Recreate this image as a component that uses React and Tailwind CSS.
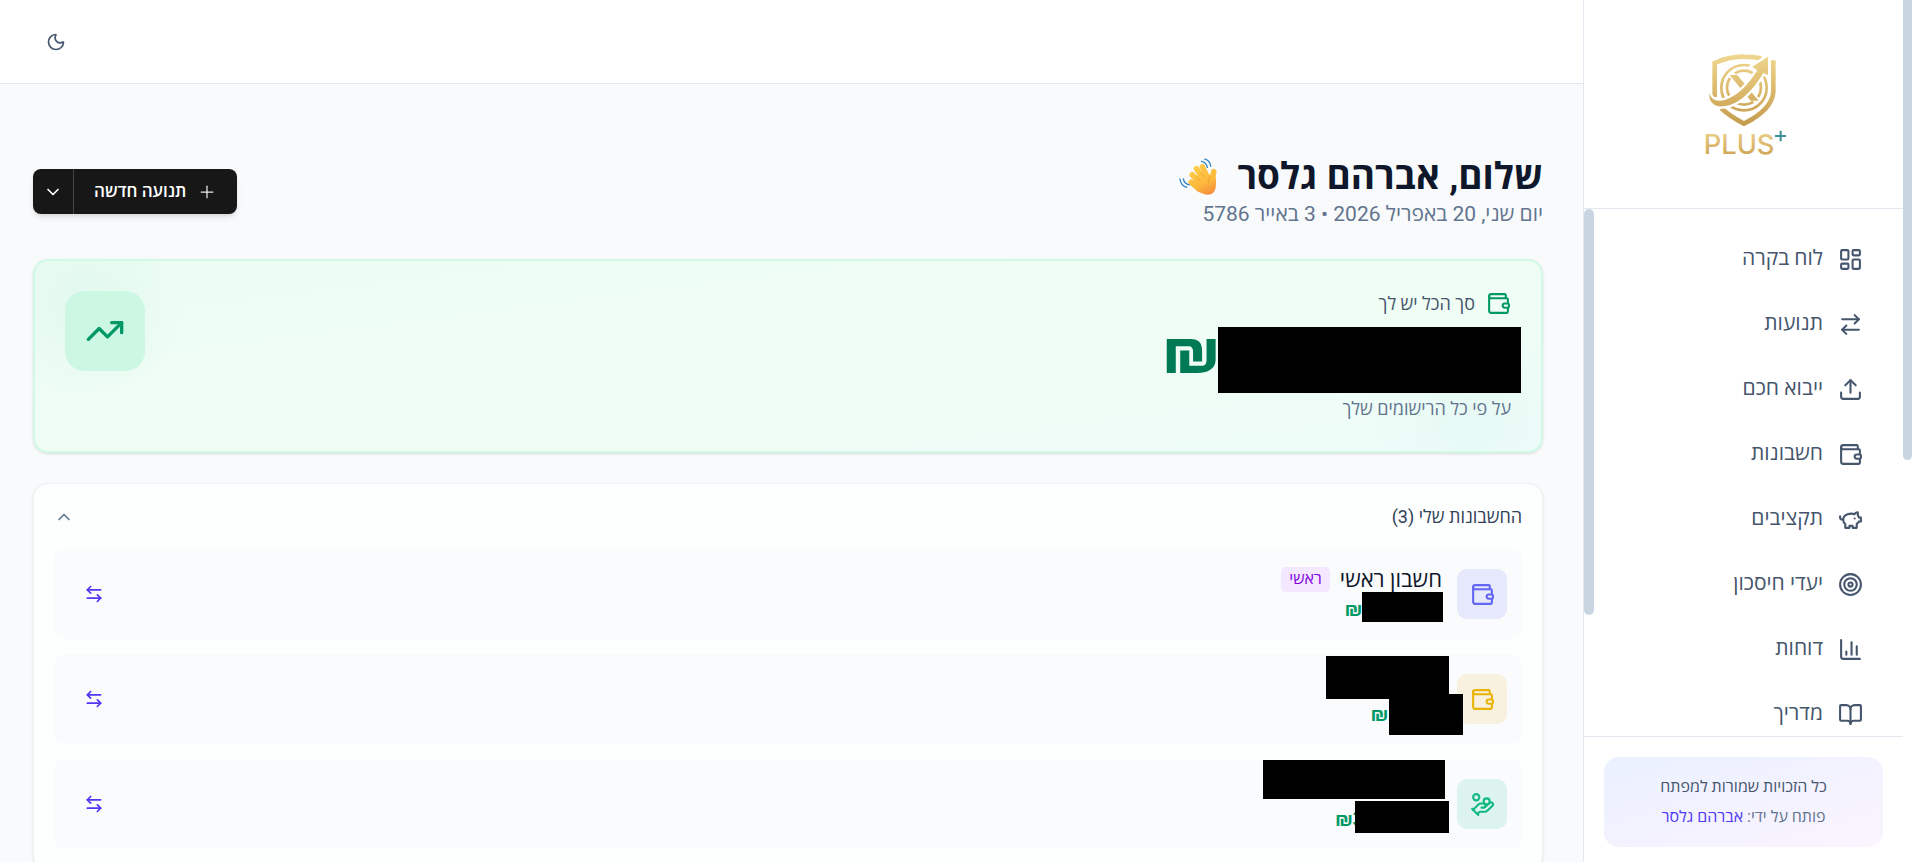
import {
    ArrowLeftRight,
    ArrowRightLeft,
    BookOpen,
    ChartColumn,
    ChevronDown,
    ChevronUp,
    HandCoins,
    LayoutDashboard,
    Moon,
    Plus,
    Target,
    TrendingUp,
    Upload,
    Wallet,
} from "lucide-react";

function Piggy(props) {
    return (
        <svg
            viewBox="0 0 24 24"
            fill="none"
            stroke="currentColor"
            strokeWidth="2"
            strokeLinecap="round"
            strokeLinejoin="round"
            {...props}
        >
            <path d="M19 5c-1.5 0-2.8 1.4-3 2-3.5-1.5-11-.3-11 5 0 1.8 0 3 2 4.5V20h4v-2h3v2h4v-4c1-.5 1.7-1 2-2h2v-4h-2c0-1-.5-1.5-1-2V5z" />
            <path d="M2 9v1c0 1.1.9 2 2 2h1" />
            <path d="M16 11h.01" />
        </svg>
    );
}

const navItems = [
    { label: "לוח בקרה", icon: LayoutDashboard },
    { label: "תנועות", icon: ArrowRightLeft },
    { label: "ייבוא חכם", icon: Upload },
    { label: "חשבונות", icon: Wallet },
    { label: "תקציבים", icon: Piggy },
    { label: "יעדי חיסכון", icon: Target },
    { label: "דוחות", icon: ChartColumn },
    { label: "מדריך", icon: BookOpen },
];

const accounts = [
    {
        id: "main",
        name: "חשבון ראשי",
        badge: "ראשי",
        icon: Wallet,
        tile: "bg-[#e6e8fc] text-[#6366f1]",
        balance: "₪",
        indent: "ps-[80px]",
        masks: ["-start-px top-[28px] h-[30px] w-[81px]"],
    },
    {
        id: "second",
        icon: Wallet,
        tile: "bg-[#f8f1df] text-[#eab308]",
        balance: "₪",
        indent: "ps-[54px]",
        masks: [
            "-start-[7px] -top-[13px] h-[43px] w-[123px]",
            "-start-[21px] top-[25px] h-[41px] w-[74px]",
        ],
    },
    {
        id: "third",
        icon: HandCoins,
        tile: "bg-[#dcf4ed] text-[#10b981]",
        balance: "₪3",
        indent: "ps-[78px]",
        masks: [
            "-start-[3px] -top-[14px] h-[39px] w-[182px]",
            "-start-[7px] top-[27px] h-[32px] w-[94px]",
        ],
    },
];

function Logo() {
    return (
        <svg viewBox="354 155 261 315" className="h-[105px] w-[87px] overflow-visible" role="img" aria-label="PLUS+" direction="ltr">
            <defs>
                <linearGradient id="gold" x1="0" y1="160" x2="0" y2="378" gradientUnits="userSpaceOnUse">
                    <stop offset="0" stopColor="#f0d890" />
                    <stop offset="0.5" stopColor="#dcb96c" />
                    <stop offset="1" stopColor="#c39a4c" />
                </linearGradient>
                <linearGradient id="goldText" x1="0" y1="402" x2="0" y2="465" gradientUnits="userSpaceOnUse">
                    <stop offset="0" stopColor="#e8cb85" />
                    <stop offset="1" stopColor="#cfa655" />
                </linearGradient>
            </defs>
            <g fill="none" stroke="url(#gold)">
                <path d="M398 290V188Q442 168 486 169Q514 169 538 174" strokeWidth="14" />
                <path d="M574 180V275Q570 328 486 370Q446 350 418 324" strokeWidth="14" />
                <circle cx="486" cy="262" r="68" strokeWidth="8" />
                <circle cx="486" cy="262" r="51" strokeWidth="8" strokeDasharray="60 20" strokeDashoffset="-50" />
            </g>
            <path d="M443 224H466L530 301H506Z" fill="url(#gold)" />
            <path
                d="M381 279Q391 308 428 299Q480 284 526 210L511 199L558 169V224L544 218Q497 296 442 315Q382 330 381 279Z"
                fill="url(#gold)"
                stroke="#fff"
                strokeWidth="14"
                paintOrder="stroke"
            />
            <text x="365" y="462" fontSize="82" fontWeight="500" fill="url(#goldText)" className="font-['Inter',sans-serif]">
                PLUS
            </text>
            <path d="M596 391V423M579 407H612" stroke="#3a8f98" strokeWidth="6" />
        </svg>
    );
}

function WavingHand() {
    return (
        <svg viewBox="88 76 115 114" className="size-[38px]" role="img" aria-label="wave">
            <defs>
                <linearGradient id="skin" x1="130" y1="95" x2="180" y2="190" gradientUnits="userSpaceOnUse">
                    <stop offset="0" stopColor="#ffcf4a" />
                    <stop offset="0.6" stopColor="#fdb93c" />
                    <stop offset="1" stopColor="#f58a3c" />
                </linearGradient>
            </defs>
            <g fill="none" stroke="url(#skin)" strokeLinecap="round" strokeWidth="17">
                <path d="M125 149L150 170" />
                <path d="M128 126L152 150" />
                <path d="M141 108L160 136" />
                <path d="M159 102L172 132" />
                <path d="M193 117Q189 130 192 150" />
            </g>
            <path d="M132 136L170 112Q184 134 196 134Q206 166 190 182Q172 192 152 180L128 160Z" fill="url(#skin)" />
            <path d="M139 132L152 145M153 120L164 134M182 128Q174 140 178 152" fill="none" stroke="#e8962e" strokeWidth="2" />
            <g fill="none" stroke="#2b83cc" strokeLinecap="round" strokeWidth="4">
                <path d="M156 86Q170 88 174 104" />
                <path d="M166 79Q182 83 184 100" />
                <path d="M101 139Q105 154 119 157" />
                <path d="M91 139Q94 160 111 164" />
            </g>
        </svg>
    );
}

function Sidebar() {
    return (
        <aside className="flex w-80 shrink-0 flex-col border-e border-slate-200 bg-white">
            <div className="flex h-[209px] shrink-0 justify-center border-b border-slate-200 pt-[52px]">
                <Logo />
            </div>

            <div className="flex min-h-0 flex-1">
                <nav className="flex-1 overflow-hidden py-5 ps-5" aria-label="ראשי">
                    <ul className="flex flex-col gap-[5px]">
                        {navItems.map(({ label, icon: Icon }) => (
                            <li key={label}>
                                <a href="#" className="flex h-[60px] items-center gap-[15px] px-5 text-[21px] text-slate-600">
                                    <Icon className="size-[25px]" aria-hidden="true" />
                                    {label}
                                </a>
                            </li>
                        ))}
                    </ul>
                </nav>
                <div className="h-[77%] w-[10px] rounded-full bg-slate-300" />
            </div>

            <div className="shrink-0 border-t border-slate-200 px-5 pt-5 pb-[15px]">
                <div className="rounded-[15px] bg-linear-to-br from-[#eaf1ff] via-[#f3f2ff] to-[#faf5ff] py-[15px] text-center text-[16px] leading-[30px]">
                    <p className="text-slate-600">כל הזכויות שמורות למפתח</p>
                    <p className="text-slate-500">
                        פותח על ידי: <span className="font-medium text-indigo-600">אברהם גלסר</span>
                    </p>
                </div>
            </div>
        </aside>
    );
}

function NewTransaction() {
    return (
        <div className="flex h-[45px] overflow-hidden rounded-lg bg-[#171717] text-white shadow-md">
            <button type="button" className="flex items-center gap-[11px] px-5 text-[17px] font-semibold">
                <Plus className="size-5 text-white/90" strokeWidth={1.5} aria-hidden="true" />
                תנועה חדשה
            </button>
            <button type="button" aria-label="אפשרויות נוספות" className="flex w-[41px] items-center justify-center border-s border-white/20">
                <ChevronDown className="size-5" />
            </button>
        </div>
    );
}

function TotalCard() {
    return (
        <section className="relative flex justify-between overflow-hidden rounded-[15px] border-2 border-emerald-100 bg-linear-to-br from-[#ecfdf5] via-[#f0fdf4] to-[#effdfa] p-[30px] shadow">
            <div className="absolute -top-[60px] -left-[50px] size-[200px] bg-[radial-gradient(closest-side,#0596690c,transparent)]" />
            <div className="absolute -right-[40px] -bottom-[80px] size-[220px] bg-[radial-gradient(closest-side,#0d94880a,transparent)]" />
            <div className="relative">
                <div className="flex h-[25px] items-center gap-[11px] text-[18px] text-slate-600">
                    <Wallet className="size-[25px] text-emerald-600" aria-hidden="true" />
                    סך הכל יש לך
                </div>
                <div className="relative mt-[10px] flex h-[60px] items-start text-[64px] leading-[52px] font-bold text-emerald-700">
                    <span className="absolute -start-[10px] top-px h-[66px] w-[303px] bg-black" />
                    <span className="ps-[292px]">₪</span>
                </div>
                <p className="mt-[10px] text-[18px] leading-[25px] text-slate-500">על פי כל הרישומים שלך</p>
            </div>
            <div className="relative flex size-20 items-center justify-center rounded-[20px] bg-[#c9f6e0]/90 text-emerald-600">
                <TrendingUp className="size-10" />
            </div>
        </section>
    );
}

function AccountRow({ account }) {
    const Icon = account.icon;

    return (
        <li className="flex h-[90px] items-center gap-[15px] rounded-[10px] bg-[#fafbfd] px-[15px]">
            <div className={`flex size-[50px] items-center justify-center rounded-[10px] ${account.tile}`}>
                <Icon className="size-[25px]" />
            </div>
            <div className="relative flex-1">
                <div className="flex h-[30px] items-center gap-[10px]">
                    {account.name && <span className="text-[22px] font-medium text-slate-900">{account.name}</span>}
                    {account.badge && (
                        <span className="flex h-[25px] items-center rounded-[5px] bg-purple-100 px-2 text-[16px] text-purple-700">
                            {account.badge}
                        </span>
                    )}
                </div>
                <div className={`flex h-[30px] items-center text-[20px] leading-[28px] font-semibold text-emerald-600 ${account.indent}`}>
                    {account.balance}
                </div>
                {account.masks.map((mask) => (
                    <span key={mask} className={`absolute bg-black ${mask}`} />
                ))}
            </div>
            <button type="button" aria-label="העברה" className="flex size-[50px] items-center justify-center text-indigo-600">
                <ArrowLeftRight className="size-5" />
            </button>
        </li>
    );
}

export default function App() {
    return (
        <div dir="rtl" className="flex h-screen overflow-hidden bg-slate-50 font-['Roboto','Open_Sans',sans-serif]">
            <div className="w-[9px] shrink-0 bg-white">
                <div className="h-[460px] rounded-b-full bg-slate-300" />
            </div>
            <Sidebar />

            <div className="min-w-0 flex-1">
                <header className="flex h-[84px] items-center justify-end border-b border-slate-200 bg-white pe-9">
                    <button type="button" aria-label="מצב כהה" className="flex size-10 items-center justify-center text-slate-600">
                        <Moon className="size-5" />
                    </button>
                </header>

                <main className="flex flex-col gap-[30px] ps-10 pe-[33px] pt-[70px]">
                    <div className="flex items-center justify-between">
                        <div>
                            <h1 className="flex items-center gap-5 text-[37px] leading-[45px] font-bold text-slate-900">
                                שלום, אברהם גלסר
                                <WavingHand />
                            </h1>
                            <p className="text-[21px] leading-[30px] text-slate-500">יום שני, 20 באפריל 2026 • 3 באייר 5786</p>
                        </div>
                        <NewTransaction />
                    </div>

                    <TotalCard />

                    <section className="rounded-[15px] border border-slate-100 bg-[#fdfefe] px-5 pb-5 shadow-sm">
                        <div className="flex h-[65px] items-center justify-between">
                            <h2 className="text-[18px] text-slate-700">החשבונות שלי (3)</h2>
                            <button type="button" aria-label="כיווץ" className="text-slate-500">
                                <ChevronUp className="size-5" />
                            </button>
                        </div>
                        <ul className="flex flex-col gap-[15px]">
                            {accounts.map((account) => (
                                <AccountRow key={account.id} account={account} />
                            ))}
                        </ul>
                    </section>
                </main>
            </div>
        </div>
    );
}
